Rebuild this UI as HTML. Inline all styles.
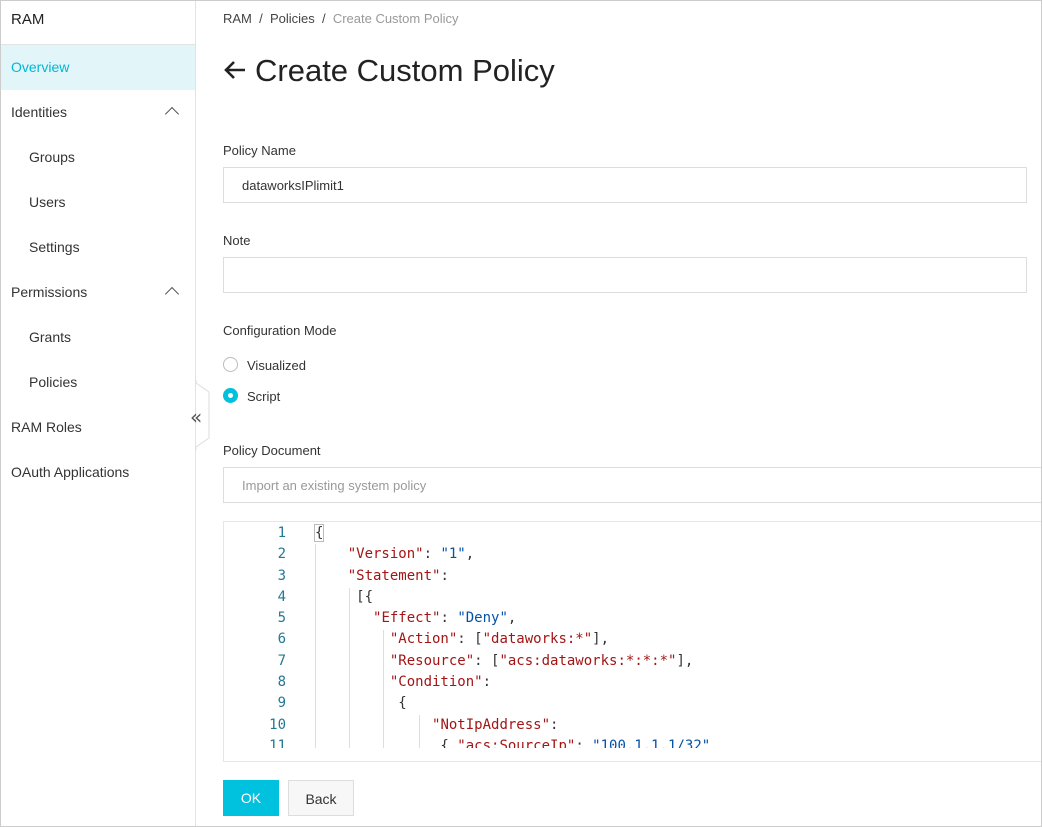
<!DOCTYPE html>
<html><head><style>
*{box-sizing:border-box;margin:0;padding:0}
body{width:1042px;height:827px;overflow:hidden;font-family:"Liberation Sans","DejaVu Sans",sans-serif;background:#fff;color:#333;position:relative}
.frame{position:absolute;inset:0;border:1px solid #ccc;pointer-events:none;z-index:9}
.side{position:absolute;left:0;top:0;width:196px;height:827px;border-right:1px solid #e3e3e3}
.side .t{height:45px;padding:11px 11px;font-size:15px;color:#222;border-bottom:1px solid #e3e3e3}
.side .i{height:45px;line-height:45px;font-size:14px;padding-left:11px;color:#333;position:relative}
.side .s{padding-left:29px}
.side .a{background:#e2f6fa;color:#00b7d5}
.chev{position:absolute;right:18px;top:19px;width:10px;height:10px;border-left:1px solid #555;border-top:1px solid #555;transform:rotate(45deg)}
.main{position:absolute;left:223px;top:0;right:0}
.bc{position:absolute;top:11px;font-size:13px;color:#444}
.bc span{color:#999}
h1{position:absolute;top:53px;left:32px;font-weight:normal;font-size:31px;color:#222;font-family:"Liberation Sans",sans-serif}
.lbl{position:absolute;font-size:13px;color:#333}
.inp{position:absolute;left:0;width:804px;height:36px;border:1px solid #ddd;font-size:13px;padding:10px 18px;color:#333}
.radio{position:absolute;left:0;width:15px;height:15px;border-radius:50%;border:1px solid #bbb}
.radio.on{background:#00c1de;border-color:#00c1de}
.radio.on:after{content:"";position:absolute;left:4px;top:4px;width:5px;height:5px;background:#fff;border-radius:50%}
.code{position:absolute;left:0;top:521px;width:819px;height:241px;border:1px solid #e6e6e6;overflow:hidden}
.ln{position:absolute;font-family:"DejaVu Sans Mono",monospace;font-size:14px;line-height:21.3px;white-space:pre}
.k{color:#a31515}.v{color:#0451a5}.n{color:#237893}
.g{position:absolute;width:1px;background:#ddd}
.btn{position:absolute;top:780px;height:36px;font-size:14px;text-align:center;line-height:36px}
</style></head><body>
<div class="frame"></div>
<div class="side">
<div class="t">RAM</div>
<div class="i a">Overview</div>
<div class="i">Identities<div class="chev"></div></div>
<div class="i s">Groups</div>
<div class="i s">Users</div>
<div class="i s">Settings</div>
<div class="i">Permissions<div class="chev"></div></div>
<div class="i s">Grants</div>
<div class="i s">Policies</div>
<div class="i">RAM Roles</div>
<div class="i">OAuth Applications</div>
</div>
<svg style="position:absolute;left:185px;top:380px" width="30" height="70"><polyline points="11,0 11,3 24,12 24,58 11,67 11,70" fill="#fff" stroke="#ddd"/><text x="5" y="44" font-size="20" fill="#555" font-family="DejaVu Sans">«</text></svg>
<div class="main">
<div class="bc">RAM &nbsp;/&nbsp; Policies &nbsp;/&nbsp; <span>Create Custom Policy</span></div>
<svg style="position:absolute;left:0;top:60px" width="24" height="20"><path d="M22 10H3M11 2L3 10L11 18" fill="none" stroke="#222" stroke-width="2.6"/></svg>
<h1>Create Custom Policy</h1>
<div class="lbl" style="top:143px">Policy Name</div>
<div class="inp" style="top:167px">dataworksIPlimit1</div>
<div class="lbl" style="top:233px">Note</div>
<div class="inp" style="top:257px"></div>
<div class="lbl" style="top:323px">Configuration Mode</div>
<div class="radio" style="top:357px"></div><div class="lbl" style="top:358px;left:24px">Visualized</div>
<div class="radio on" style="top:388px"></div><div class="lbl" style="top:389px;left:24px">Script</div>
<div class="lbl" style="top:443px">Policy Document</div>
<div class="inp" style="top:467px;width:820px;color:#999">Import an existing system policy</div>
<div class="code">
<div class="ln n" style="left:0;width:62px;text-align:right;top:1px">1
2
3
4
5
6
7
8
9
10
11</div>
<div class="g" style="left:91px;top:22px;height:230px"></div>
<div class="g" style="left:125px;top:66px;height:180px"></div>
<div class="g" style="left:159px;top:108px;height:140px"></div>
<div class="g" style="left:195px;top:193px;height:60px"></div>
<div class="ln" style="left:90px;top:1px"><span style="border:1px solid #bbb">{</span>
    <span class="k">"Version"</span>: <span class="v">"1"</span>,
    <span class="k">"Statement"</span>:
     [{
       <span class="k">"Effect"</span>: <span class="v">"Deny"</span>,
         <span class="k">"Action"</span>: [<span class="k">"dataworks:*"</span>],
         <span class="k">"Resource"</span>: [<span class="k">"acs:dataworks:*:*:*"</span>],
         <span class="k">"Condition"</span>:
          {
              <span class="k">"NotIpAddress"</span>:
               { <span class="k">"acs:SourceIp"</span>: <span class="v">"100.1.1.1/32"</span></div>
<div style="position:absolute;left:0;right:0;top:226px;height:20px;background:#fff"></div>
</div>
<div class="btn" style="left:0;width:56px;background:#00c1de;color:#fff">OK</div>
<div class="btn" style="left:65px;width:66px;border:1px solid #ddd;background:#f7f7f7;color:#333">Back</div>
</div>
</body></html>
